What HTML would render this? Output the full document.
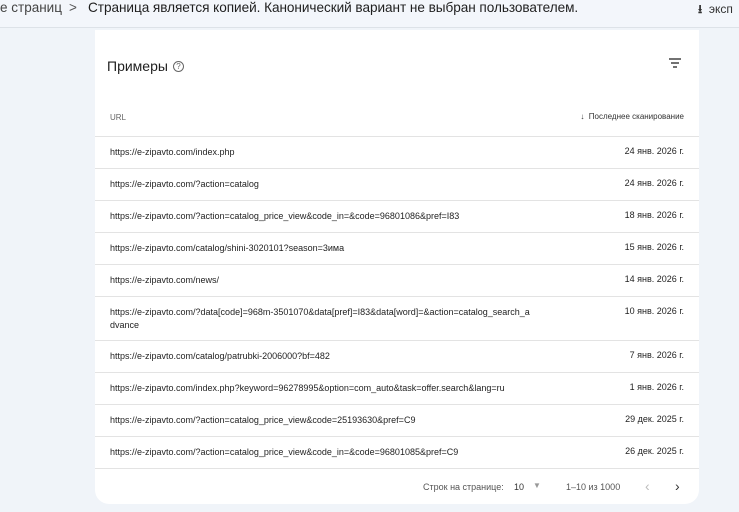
<!DOCTYPE html>
<html><head><meta charset="utf-8"><style>
*{margin:0;padding:0;box-sizing:border-box}
body{width:739px;height:512px;overflow:hidden;background:#f0f4f9;font-family:"Liberation Sans",sans-serif;color:#1f1f1f;position:relative}
.top{position:absolute;left:0;top:0;width:739px;height:28px;border-bottom:1px solid #dde2e8;background:#f3f6fb}
.top .bc{position:absolute;left:0;top:0px;font-size:13.5px;color:#444;white-space:nowrap}
.top .gt{position:absolute;left:69px;top:0px;font-size:13.5px;color:#555}
.top .t{position:absolute;left:88px;top:0px;font-size:13.6px;color:#1f1f1f;white-space:nowrap;letter-spacing:-0.05px}
.top .ex{position:absolute;left:698px;top:0px;font-size:12px;color:#333}
.card{position:absolute;left:95px;top:30px;width:604px;height:474px;background:#fff;border-radius:0 0 14px 14px}
.h{position:absolute;left:12px;top:28px;font-size:14px}
.q{position:absolute;left:78px;top:31px;width:11px;height:11px;border:1px solid #666;border-radius:50%;font-size:8px;text-align:center;line-height:9px;color:#666}
.row{position:absolute;left:0;width:604px;border-top:1px solid #e3e3e3;font-size:9px}
.row .u{position:absolute;left:15px;top:9px;width:430px;line-height:13px;word-break:break-all}
.row .d{position:absolute;right:15px;top:9px}
</style></head><body>
<div class="top"><span class="bc">е страниц</span><span class="gt">&gt;</span><span class="t">Страница является копией. Канонический вариант не выбран пользователем.</span><span class="ex"><b>⭳</b>&nbsp; эксп</span></div>
<div class="card">
<div class="h">Примеры</div><div class="q">?</div>
<svg style="position:absolute;left:574px;top:28px" width="12" height="10"><path d="M0 1h12M2 5h8M4 9h4" stroke="#444" stroke-width="1.5"/></svg>
<div style="position:absolute;left:15px;top:83px;font-size:8px;color:#666">URL</div>
<div style="position:absolute;right:15px;top:82px;font-size:8px;color:#333">↓ &nbsp;Последнее сканирование</div>
<div class="row" style="top:106px;height:32px"><div class="u">https://e-zipavto.com/index.php</div><div class="d">24 янв. 2026 г.</div></div>
<div class="row" style="top:138px"><div class="u">https://e-zipavto.com/?action=catalog</div><div class="d">24 янв. 2026 г.</div></div>
<div class="row" style="top:170px"><div class="u">https://e-zipavto.com/?action=catalog_price_view&amp;code_in=&amp;code=96801086&amp;pref=I83</div><div class="d">18 янв. 2026 г.</div></div>
<div class="row" style="top:202px"><div class="u">https://e-zipavto.com/catalog/shini-3020101?season=3има</div><div class="d">15 янв. 2026 г.</div></div>
<div class="row" style="top:234px"><div class="u">https://e-zipavto.com/news/</div><div class="d">14 янв. 2026 г.</div></div>
<div class="row" style="top:266px"><div class="u" style="width:420px">https://e-zipavto.com/?data[code]=968m-3501070&amp;data[pref]=I83&amp;data[word]=&amp;action=catalog_search_advance</div><div class="d">10 янв. 2026 г.</div></div>
<div class="row" style="top:310px"><div class="u">https://e-zipavto.com/catalog/patrubki-2006000?bf=482</div><div class="d">7 янв. 2026 г.</div></div>
<div class="row" style="top:342px"><div class="u">https://e-zipavto.com/index.php?keyword=96278995&amp;option=com_auto&amp;task=offer.search&amp;lang=ru</div><div class="d">1 янв. 2026 г.</div></div>
<div class="row" style="top:374px"><div class="u">https://e-zipavto.com/?action=catalog_price_view&amp;code=25193630&amp;pref=C9</div><div class="d">29 дек. 2025 г.</div></div>
<div class="row" style="top:406px"><div class="u">https://e-zipavto.com/?action=catalog_price_view&amp;code_in=&amp;code=96801085&amp;pref=C9</div><div class="d">26 дек. 2025 г.</div></div>
<div class="row" style="top:438px;height:36px;font-size:9px;color:#555">
<span style="position:absolute;left:328px;top:13px">Строк на странице:</span>
<span style="position:absolute;left:419px;top:13px;color:#333">10</span>
<span style="position:absolute;left:438px;top:12px;color:#999;font-size:8px">▼</span>
<span style="position:absolute;left:471px;top:13px">1–10 из 1000</span>
<span style="position:absolute;left:550px;top:9px;color:#bbb;font-size:14px">‹</span>
<span style="position:absolute;left:580px;top:9px;color:#333;font-size:14px">›</span>
</div>
</div>
</body></html>
